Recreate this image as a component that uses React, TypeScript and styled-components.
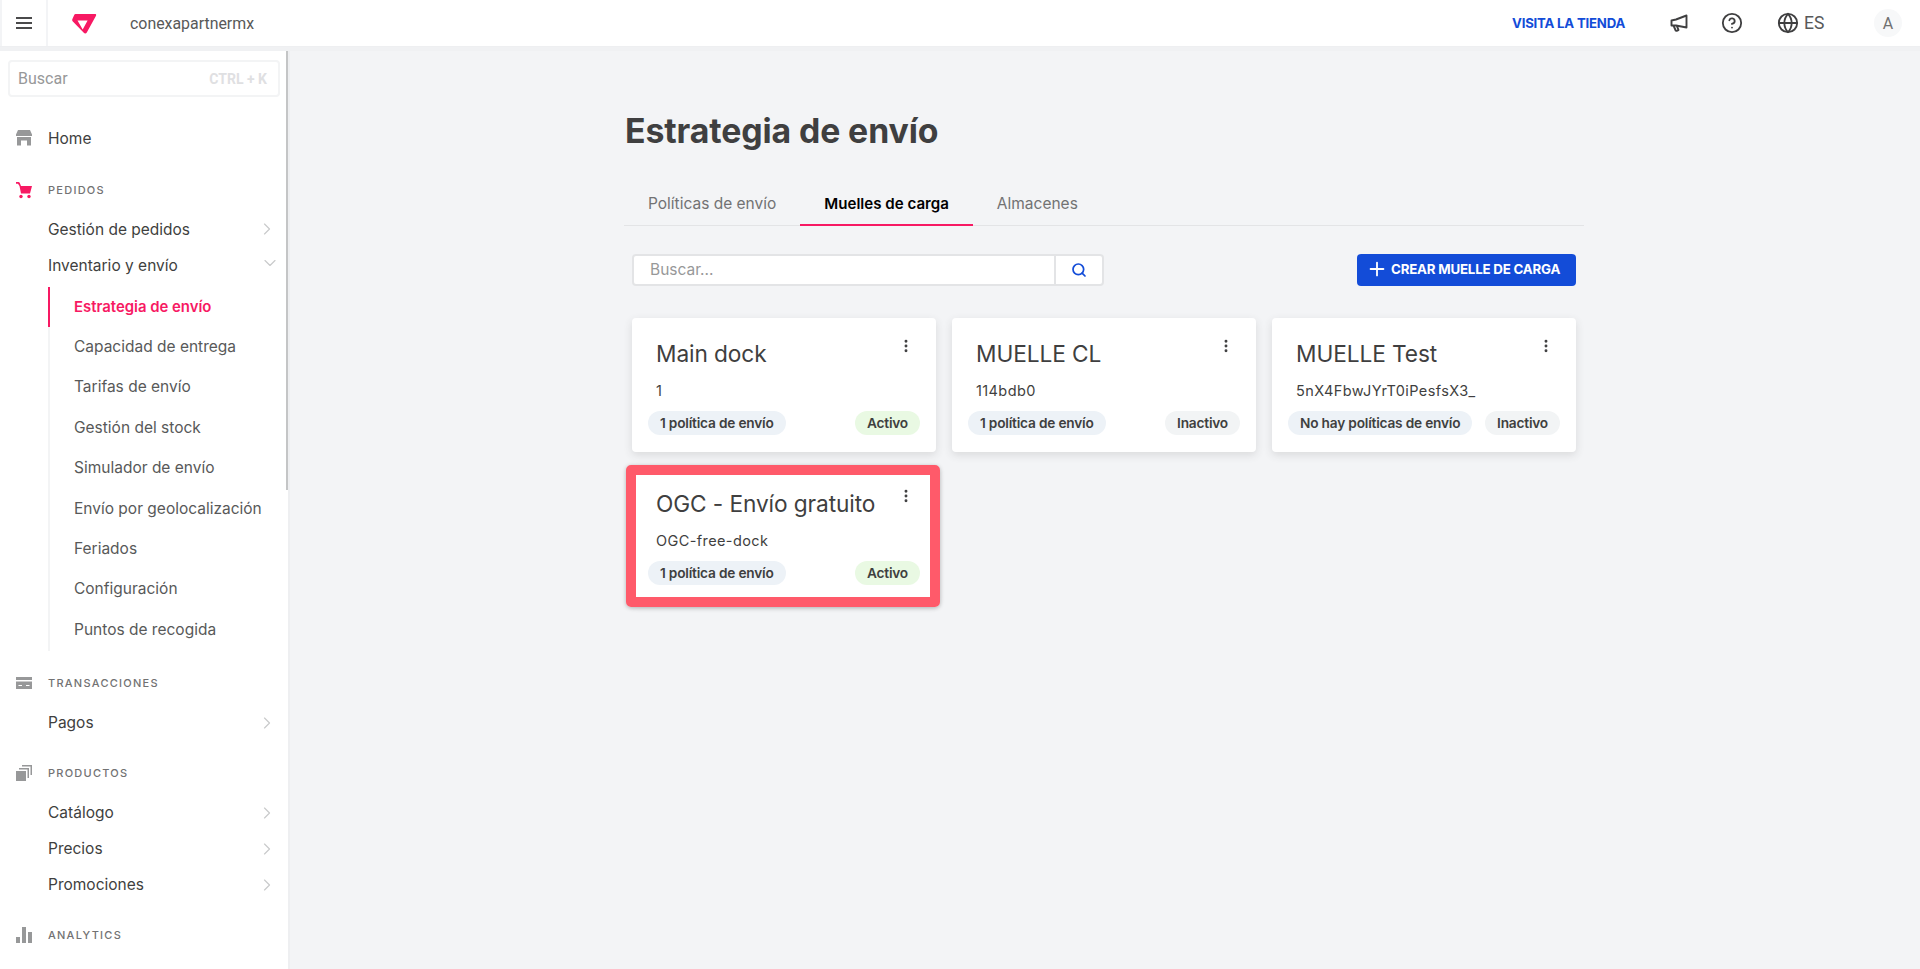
import React from "react";
import styled, { createGlobalStyle } from "styled-components";
import { ChevronRight, ChevronDown, CircleHelp, Globe, Search, Plus, EllipsisVertical } from "lucide-react";

const Global = createGlobalStyle`
  html, body { margin: 0; padding: 0; height: 969px; overflow: hidden; background: #f3f4f6; }
  * { box-sizing: border-box; }
  body { font-family: Inter, "Noto Sans", sans-serif; color: #3f3f40; }
`;

const Page = styled.div`
  display: flex;
  flex-direction: column;
  height: 969px;
  overflow: hidden;
`;
const Header = styled.header`
  display: flex;
  align-items: center;
  height: 47px;
  background: #fff;
  border-bottom: 1px solid #eeeff1;
  box-shadow: 0 4px 0 #f0f1f3;
  flex: none;
  position: relative;
  z-index: 2;
`;
const MenuCell = styled.div`
  width: 48px;
  height: 46px;
  display: flex;
  align-items: center;
  justify-content: center;
  border-left: 2px solid #f3f4f6;
  border-right: 2px solid #f3f4f6;
`;
const LogoCell = styled.div`
  display: flex;
  align-items: center;
  width: 82px;
  padding-left: 24px;
`;
const Account = styled.span`
  font: 400 15.9px Roboto, sans-serif;
  color: #585959;
`;
const HeaderRight = styled.div`
  margin-left: auto;
  display: flex;
  align-items: center;
  height: 46px;
`;
const StoreLink = styled.a`
  font: 700 13.2px Inter, sans-serif;
  color: #134cd8;
  width: 113px;
  white-space: nowrap;
  letter-spacing: -0.2px;
`;
const HeadIcon = styled.span<{ $m: number }>`
  display: flex;
  align-items: center;
  justify-content: center;
  color: #3f3f40;
  margin-left: ${(p) => p.$m}px;
`;
const Lang = styled.span`
  font: 400 17.5px Roboto, sans-serif;
  color: #585959;
  margin-left: 5px;
  width: 21px;
  white-space: nowrap;
`;
const Avatar = styled.span`
  width: 28px;
  height: 28px;
  border-radius: 50%;
  background: #f7f8f9;
  margin: 0 18px 0 49px;
  display: flex;
  align-items: center;
  justify-content: center;
  font: 400 16px Roboto, sans-serif;
  color: #707070;
`;
const Body = styled.div`
  display: flex;
  flex: 1;
  min-height: 0;
`;
const Sidebar = styled.aside`
  width: 288px;
  flex: none;
  background: #fff;
  padding: 13px 7px 0 8px;
  overflow: hidden;
  position: relative;
  box-shadow: 2px 0 0 #eeeff1;
`;
const ScrollThumb = styled.div`
  position: absolute;
  top: 0;
  right: 0;
  width: 2.5px;
  height: 443px;
  background: #c4c5c6;
`;
const SideSearch = styled.div`
  height: 37px;
  width: 272px;
  border: 2px solid #f3f4f5;
  border-radius: 4px;
  display: flex;
  align-items: center;
  justify-content: space-between;
  padding: 0 11px 0 8px;
`;
const SideSearchText = styled.span`
  font: 400 16px Roboto, sans-serif;
  color: #979899;
`;
const SideSearchKey = styled.span`
  font: 700 14px Roboto, sans-serif;
  color: #dfe0e2;
`;
const HomeRow = styled.div`
  display: flex;
  align-items: center;
  height: 44px;
  margin: 20px 0 0 8px;
  padding-bottom: 2px;
  font: 400 15.5px Inter, sans-serif;
  color: #3f3f40;
`;
const IconSlot = styled.span`
  width: 32px;
  display: flex;
  align-items: center;
`;
const Heading = styled.div<{ $mt: number }>`
  display: flex;
  align-items: center;
  height: 24px;
  margin: ${(p) => p.$mt}px 0 0 8px;
  font: 500 11px Inter, sans-serif;
  letter-spacing: 1.25px;
  color: #727273;
`;
const Rows = styled.div<{ $mt: number }>`
  margin-top: ${(p) => p.$mt}px;
`;
const Row = styled.div`
  display: flex;
  align-items: center;
  justify-content: space-between;
  height: 36px;
  padding: 0 4px 2px 40px;
  font: 400 15.5px Inter, sans-serif;
  color: #3f3f40;
  svg { color: #c9cacb; }
`;
const DownIcon = styled(ChevronDown)`
  margin: -4px -3px 0 0;
`;
const SubList = styled.div`
  margin: 3px 0 0 40px;
  border-left: 2px solid #f3f4f5;
`;
const SubItem = styled.div<{ $active?: boolean }>`
  height: 40.4px;
  display: flex;
  align-items: center;
  margin-left: -2px;
  padding: 0 0 ${(p) => (p.$active ? 0 : 2)}px 24px;
  border-left: 2px solid ${(p) => (p.$active ? "#f71963" : "transparent")};
  font: ${(p) => (p.$active ? 600 : 400)} ${(p) => (p.$active ? 14.9 : 15.5)}px Inter, sans-serif;
  color: ${(p) => (p.$active ? "#f71963" : "#585959")};
`;
const Main = styled.main`
  flex: 1;
  min-width: 0;
`;
const Content = styled.div`
  width: 960px;
  margin: 0 auto;
`;
const Title = styled.h1`
  margin: 0;
  padding: 62px 0 0 1px;
  height: 134px;
  font: 700 33.8px/44px Inter, sans-serif;
  letter-spacing: -0.1px;
  color: #3f3f40;
`;
const Tabs = styled.div`
  display: flex;
  height: 45px;
  border-bottom: 1px solid #e3e4e6;
`;
const Tab = styled.div<{ $active?: boolean }>`
  height: 45px;
  padding: 2px 24px 0;
  display: flex;
  align-items: center;
  font: ${(p) => (p.$active ? 600 : 400)} ${(p) => (p.$active ? 15.1 : 15.5)}px Inter, sans-serif;
  color: ${(p) => (p.$active ? "#000" : "#727273")};
  border-bottom: 2px solid ${(p) => (p.$active ? "#f71963" : "transparent")};
`;
const Toolbar = styled.div`
  display: flex;
  justify-content: space-between;
  align-items: center;
  margin-top: 28px;
  padding: 0 8px;
`;
const SearchBox = styled.div`
  width: 472px;
  height: 32px;
  display: flex;
  background: #fff;
  border: 2px solid #e3e4e6;
  border-radius: 4px;
`;
const SearchInput = styled.div`
  flex: 1;
  display: flex;
  align-items: center;
  padding: 0 0 2px 16px;
  font: 400 15.5px Inter, sans-serif;
  color: #979899;
  border-right: 2px solid #e3e4e6;
`;
const SearchButton = styled.div`
  width: 46px;
  display: flex;
  align-items: center;
  justify-content: center;
  color: #134cd8;
`;
const CreateButton = styled.button`
  width: 219px;
  height: 32px;
  border: 0;
  border-radius: 4px;
  background: #134cd8;
  color: #fff;
  font: 700 13.3px Inter, sans-serif;
  letter-spacing: -0.2px;
  display: flex;
  align-items: center;
  gap: 3px;
  padding: 0 0 2px 9px;
  white-space: nowrap;
`;
const Grid = styled.div`
  display: grid;
  grid-template-columns: repeat(3, 304px);
  gap: 16px;
  margin-top: 32px;
  padding: 0 8px;
`;
const Card = styled.div`
  position: relative;
  height: 134px;
  background: #fff;
  border-radius: 4px;
  box-shadow: 0 3px 9px rgba(61, 62, 64, 0.14);
  padding: 0 16px;
  display: flex;
  flex-direction: column;
`;
const CardTop = styled.div`
  display: flex;
  justify-content: space-between;
  padding: 20px 0 0 8px;
  height: 54px;
`;
const CardTitle = styled.div`
  font: 400 22.7px/32px Inter, sans-serif;
  letter-spacing: -0.1px;
  color: #3f3f40;
`;
const Kebab = styled.span`
  margin-right: 6px;
  color: #3f3f40;
  display: flex;
  height: 16px;
`;
const CardId = styled.div`
  font: 400 14.5px/20px Inter, sans-serif;
  color: #3f3f40;
  padding: 9px 0 0 8px;
  height: 39px;
  letter-spacing: 0.4px;
`;
const Pills = styled.div`
  display: flex;
  justify-content: space-between;
`;
const Pill = styled.span<{ $bg: string }>`
  height: 24px;
  padding: 0 12px;
  border-radius: 12px;
  background: ${(p) => p.$bg};
  font: 600 13.7px/24px Inter, sans-serif;
  letter-spacing: -0.2px;
  color: #3f3f40;
  white-space: nowrap;
`;
const Highlight = styled.div`
  position: absolute;
  top: -3px;
  left: -6px;
  right: -4px;
  bottom: -5px;
  border: 10px solid #ff5a6a;
  border-radius: 5px;
  box-shadow: 0 1px 4px rgba(0, 0, 0, 0.25);
  pointer-events: none;
`;

const Logo = () => (
  <svg width="25" height="21" viewBox="0 0 25 21">
    <path
      fill="#f71963"
      fillRule="evenodd"
      d="M3.500 1h19.500c1 0 1.500.7 1 1.700L14.800 19.500c-.6 1.200-2.200 1.300-3 .3L.6 8.200C.1 7.600 0 7 .3 6.300L2.200 2C2.500 1.300 2.900 1 3.500 1zM5.500 7.500l5.200 9 4.900-9z"
    />
  </svg>
);
const Burger = () => (
  <svg width="16" height="14" viewBox="0 0 16 14">
    <path fill="#4a4a4b" d="M0 1h16v2H0zM0 6h16v2H0zM0 11h16v2H0z" />
  </svg>
);
const Megaphone = () => (
  <svg width="18" height="20" viewBox="0 0 18 20" fill="none" stroke="#3f3f40" strokeWidth="1.900" strokeLinejoin="round">
    <path d="M16.500 2.500v12L6 12.500H1.500v-5L6 6.500z" />
    <path d="M3.500 12.500l2.200 5c.8.600 2 .2 2.800-.4l-1.600-4.300" />
  </svg>
);
const StoreIcon = () => (
  <svg width="16" height="16" viewBox="0 0 16 16">
    <path fill="#979899" d="M2 0h12l2 4.500v1.500H0V4.500zM1 7h14v8.500h-4V10.500H5v5H1z" />
  </svg>
);
const CartIcon = () => (
  <svg width="16" height="17" viewBox="0 0 16 17">
    <path fill="#f71963" d="M0 0h2.400c.6 0 1 .3 1.300.8L5 4h11l-2 7.500H5L3.500 4 2 1.800H0z" />
    <circle fill="#f71963" cx="5" cy="14.500" r="1.700" />
    <circle fill="#f71963" cx="13" cy="14.500" r="1.700" />
  </svg>
);
const CardIcon = () => (
  <svg width="16" height="12" viewBox="0 0 16 12">
    <path fill="#979899" d="M0 0h16v3H0zM0 4.500h16V12H0zM2.500 8v1H6V8zM10 8v1h3.500V8z" fillRule="evenodd" />
  </svg>
);
const StackIcon = () => (
  <svg width="16" height="16" viewBox="0 0 16 16">
    <path fill="#979899" d="M0 6h10v10H0z" />
    <path fill="#979899" d="M3 3h10v10h-1.500V4.500H3z" />
    <path fill="#979899" d="M6 0h10v10h-1.500V1.500H6z" />
  </svg>
);
const BarsIcon = () => (
  <svg width="16" height="16" viewBox="0 0 16 16">
    <path fill="#979899" d="M0 10h4v6H0zM6 0h4v16H6zM12 5h4v11h-4z" />
  </svg>
);

const Right = () => <ChevronRight size={20} strokeWidth={1.400} />;

type Dock = { name: string; id: string; policy: string; status: string; highlight?: boolean };
const docks: Dock[] = [
  { name: "Main dock", id: "1", policy: "1 política de envío", status: "Activo" },
  { name: "MUELLE CL", id: "114bdb0", policy: "1 política de envío", status: "Inactivo" },
  { name: "MUELLE Test", id: "5nX4FbwJYrT0iPesfsX3_", policy: "No hay políticas de envío", status: "Inactivo" },
  { name: "OGC - Envío gratuito", id: "OGC-free-dock", policy: "1 política de envío", status: "Activo", highlight: true },
];
const subItems = [
  "Estrategia de envío",
  "Capacidad de entrega",
  "Tarifas de envío",
  "Gestión del stock",
  "Simulador de envío",
  "Envío por geolocalización",
  "Feriados",
  "Configuración",
  "Puntos de recogida",
];

export default function App() {
  return (
    <Page>
      <Global />
      <Header>
        <MenuCell><Burger /></MenuCell>
        <LogoCell><Logo /></LogoCell>
        <Account>conexapartnermx</Account>
        <HeaderRight>
          <StoreLink>VISITA LA TIENDA</StoreLink>
          <HeadIcon $m={45}><Megaphone /></HeadIcon>
          <HeadIcon $m={33}><CircleHelp size={22} strokeWidth={2} /></HeadIcon>
          <HeadIcon $m={34}><Globe size={22} strokeWidth={2} /></HeadIcon>
          <Lang>ES</Lang>
          <Avatar>A</Avatar>
        </HeaderRight>
      </Header>
      <Body>
        <Sidebar>
          <ScrollThumb />
          <SideSearch>
            <SideSearchText>Buscar</SideSearchText>
            <SideSearchKey>CTRL + K</SideSearchKey>
          </SideSearch>
          <HomeRow><IconSlot><StoreIcon /></IconSlot>Home</HomeRow>
          <Heading $mt={17}><IconSlot><CartIcon /></IconSlot>PEDIDOS</Heading>
          <Rows $mt={10}>
            <Row>Gestión de pedidos<Right /></Row>
            <Row>Inventario y envío<DownIcon size={20} strokeWidth={1.400} /></Row>
          </Rows>
          <SubList>
            {subItems.map((s, i) => (
              <SubItem key={s} $active={i === 0}>{s}</SubItem>
            ))}
          </SubList>
          <Heading $mt={20}><IconSlot><CardIcon /></IconSlot>TRANSACCIONES</Heading>
          <Rows $mt={11}><Row>Pagos<Right /></Row></Rows>
          <Heading $mt={19}><IconSlot><StackIcon /></IconSlot>PRODUCTOS</Heading>
          <Rows $mt={11}>
            <Row>Catálogo<Right /></Row>
            <Row>Precios<Right /></Row>
            <Row>Promociones<Right /></Row>
          </Rows>
          <Heading $mt={19}><IconSlot><BarsIcon /></IconSlot>ANALYTICS</Heading>
        </Sidebar>
        <Main>
          <Content>
            <Title>Estrategia de envío</Title>
            <Tabs>
              <Tab>Políticas de envío</Tab>
              <Tab $active>Muelles de carga</Tab>
              <Tab>Almacenes</Tab>
            </Tabs>
            <Toolbar>
              <SearchBox>
                <SearchInput>Buscar...</SearchInput>
                <SearchButton><Search size={16} strokeWidth={2.600} /></SearchButton>
              </SearchBox>
              <CreateButton><Plus size={22} strokeWidth={2} />CREAR MUELLE DE CARGA</CreateButton>
            </Toolbar>
            <Grid>
              {docks.map((d) => (
                <Card key={d.id}>
                  <CardTop>
                    <CardTitle>{d.name}</CardTitle>
                    <Kebab><EllipsisVertical size={16} strokeWidth={2.400} /></Kebab>
                  </CardTop>
                  <CardId>{d.id}</CardId>
                  <Pills>
                    <Pill $bg="#edf2f7">{d.policy}</Pill>
                    <Pill $bg={d.status === "Activo" ? "#e9f9e3" : "#f2f4f5"}>{d.status}</Pill>
                  </Pills>
                  {d.highlight && <Highlight />}
                </Card>
              ))}
            </Grid>
          </Content>
        </Main>
      </Body>
    </Page>
  );
}
